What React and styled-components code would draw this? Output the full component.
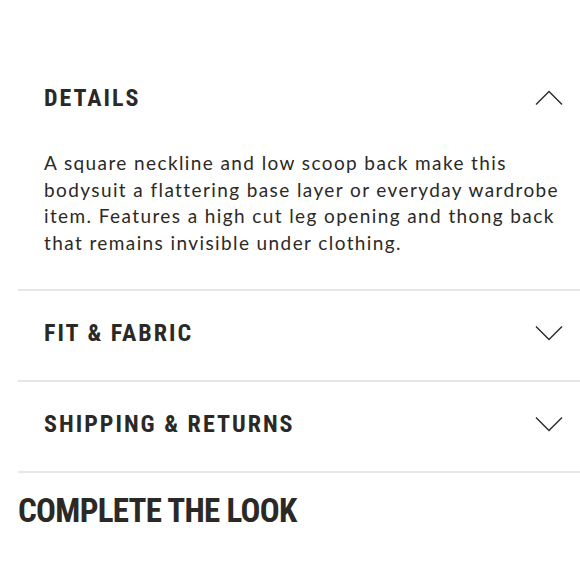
import React from "react";
import styled, { createGlobalStyle } from "styled-components";

const Global = createGlobalStyle`
  html, body { margin: 0; padding: 0; background: #fff; }
  * { box-sizing: border-box; }
`;

const Page = styled.div`
  width: 580px;
  height: 580px;
  overflow: hidden;
  padding: 56px 0 0 18px;
  color: #2b2926;
`;

const Section = styled.section`
  border-bottom: 2px solid #e6e6e3;
`;

const Header = styled.button`
  display: flex;
  width: 100%;
  height: 89px;
  align-items: center;
  justify-content: space-between;
  padding: 0 16px 6px 26px;
  background: none;
  border: 0;
  cursor: pointer;
  color: inherit;
`;

const Title = styled.h3`
  margin: 0;
  font-family: "Roboto Condensed", Roboto, sans-serif;
  font-stretch: 75%;
  font-weight: 700;
  font-size: 24px;
  letter-spacing: 2px;
  text-transform: uppercase;
`;

const Body = styled.p`
  margin: 0;
  padding: 5px 12px 33px 26px;
  font-family: Lato, sans-serif;
  font-size: 19px;
  line-height: 26.5px;
  letter-spacing: 1.4px;
`;

const Big = styled.h2`
  margin: 18px 0 0;
  font-family: "Roboto Condensed", Roboto, sans-serif;
  font-stretch: 75%;
  font-weight: 700;
  font-size: 33px;
  letter-spacing: -0.7px;
  text-transform: uppercase;
`;

const Chevron = ({ up }) => (
  <svg width="30" height="16" viewBox="0 0 30 16" fill="none">
    <path
      d={up ? "M2 14.5 L15 1.5 L28 14.5" : "M2 1.5 L15 14.5 L28 1.5"}
      stroke="#2b2926"
      strokeWidth="1.4"
    />
  </svg>
);

const sections = [
  {
    title: "Details",
    open: true,
    body:
      "A square neckline and low scoop back make this bodysuit a flattering base layer or everyday wardrobe item. Features a high cut leg opening and thong back that remains invisible under clothing.",
  },
  { title: "Fit & Fabric" },
  { title: "Shipping & Returns" },
];

export default function App() {
  return (
    <Page>
      <Global />
      {sections.map((s) => (
        <Section key={s.title}>
          <Header>
            <Title>{s.title}</Title>
            <Chevron up={s.open} />
          </Header>
          {s.open && <Body>{s.body}</Body>}
        </Section>
      ))}
      <Big>Complete the Look</Big>
    </Page>
  );
}
